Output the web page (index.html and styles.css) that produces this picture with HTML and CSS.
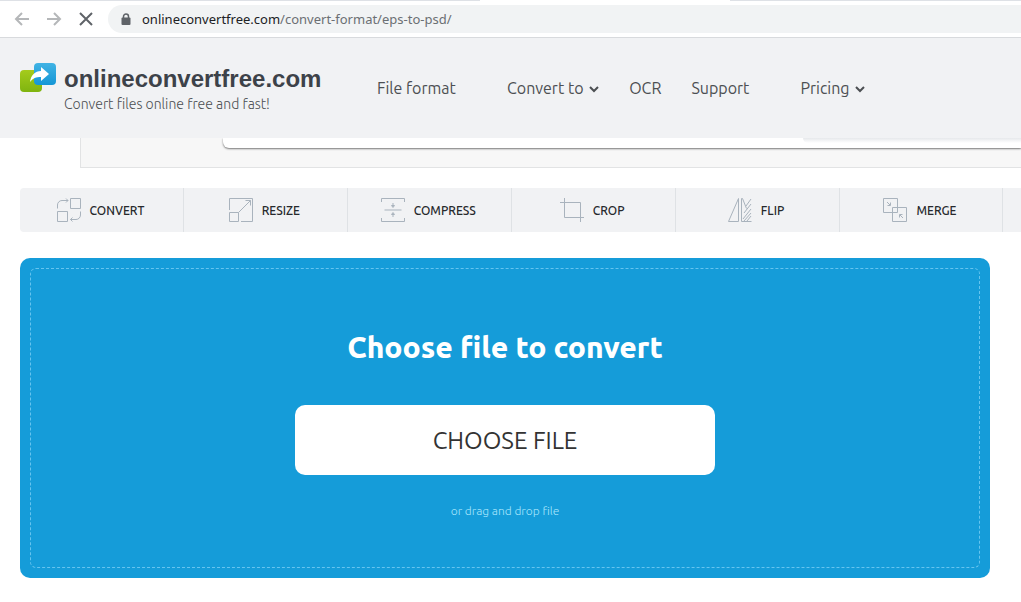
FILE: index.html
```html
<!DOCTYPE html>
<html lang="en">
<head>
  <meta charset="UTF-8">
  <meta name="viewport" content="width=device-width, initial-scale=1.0">
  <title>Convert EPS to PSD online</title>
  <link rel="stylesheet" href="styles.css">
</head>
<body>
  <div class="tab-strip">
    <div class="tab-edge"></div>
    <div class="tab-active"></div>
    <div class="tab-edge tab-edge-right"></div>
  </div>

  <div class="browser-bar">
    <div class="browser-buttons">
      <button type="button" aria-label="Back">
        <svg width="16" height="16" viewBox="0 0 16 16"><path d="M15 8H2M8 2L2 8l6 6"/></svg>
      </button>
      <button type="button" aria-label="Forward">
        <svg width="16" height="16" viewBox="0 0 16 16"><path d="M1 8h13M8 2l6 6-6 6"/></svg>
      </button>
      <button type="button" class="stop" aria-label="Stop loading">
        <svg width="16" height="16" viewBox="0 0 16 16"><path d="M2 2l12 12M14 2L2 14"/></svg>
      </button>
    </div>
    <div class="address">
      <svg width="10" height="13" viewBox="0 0 10 13">
        <path d="M2.500 5V3.500a2.500 2.500 0 0 1 5 0V5" fill="none" stroke="#5f6368" stroke-width="1.500"/>
        <rect x="0.500" y="4.500" width="9" height="7.500" rx="1" fill="#5f6368"/>
      </svg>
      <span><b>onlineconvertfree.com</b>/convert-format/eps-to-psd/</span>
    </div>
  </div>

  <header class="header">
    <a href="#" class="brand">
      <svg class="logo" width="36" height="30" viewBox="0 0 36 30">
        <defs>
          <linearGradient id="green" x1="0" y1="0" x2="0" y2="1">
            <stop offset="0" stop-color="#a5cb1c"/>
            <stop offset="1" stop-color="#7fb40f"/>
          </linearGradient>
          <linearGradient id="blue" x1="0" y1="0" x2="0" y2="1">
            <stop offset="0" stop-color="#41b3e4"/>
            <stop offset="1" stop-color="#1496d6"/>
          </linearGradient>
        </defs>
        <rect x="0" y="7" width="22" height="22" rx="4" fill="url(#green)"/>
        <rect x="14" y="0" width="22" height="22" rx="4" fill="url(#blue)"/>
        <path d="M10 19c1-7 5-11 11-11V4l8 7-8 7v-4c-5 0-8 1-11 5z" fill="#fff"/>
      </svg>
      <span class="brand-text">
        <strong>onlineconvertfree.com</strong>
        <small>Convert files online free and fast!</small>
      </span>
    </a>
    <nav class="nav">
      <a href="#" class="nav-formats">File format</a>
      <a href="#" class="nav-convert">Convert to
        <svg width="10" height="8" viewBox="0 0 10 8"><path d="M1 1l4 4 4-4"/></svg>
      </a>
      <a href="#" class="nav-ocr">OCR</a>
      <a href="#" class="nav-support">Support</a>
      <a href="#">Pricing
        <svg width="10" height="8" viewBox="0 0 10 8"><path d="M1 1l4 4 4-4"/></svg>
      </a>
    </nav>
  </header>

  <div class="banner">
    <div class="banner-card">
      <div class="banner-shade"></div>
    </div>
  </div>

  <nav class="tools">
    <a href="#">
      <svg width="26" height="26" viewBox="0 0 26 26">
        <path d="M14.500 1.500h10v10h-10zM1.500 14.500h10v10h-10zM1.500 11.500V8a4.500 4.500 0 0 1 4.500-4.500h6M10 1.500l2 2-2 2M24.500 14.500V18a4.500 4.500 0 0 1-4.500 4.500h-5.500M16.500 20.500l-2 2 2 2"/>
      </svg>
      Convert
    </a>
    <a href="#">
      <svg width="26" height="26" viewBox="0 0 26 26">
        <path d="M1.500 13V1.500h23v23H13M1.500 15.500h9v9h-9zM10.500 15.500l12-12M17.500 3.500h5v5"/>
      </svg>
      Resize
    </a>
    <a href="#">
      <svg width="26" height="26" viewBox="0 0 26 26">
        <path d="M1.500 5V1.500h23V5M1.500 21v3.500h23V21M4.500 13h17M13 6v4M11.500 8.500l1.500 2 1.500-2zM13 20v-4M11.500 17.500l1.500-2 1.500 2z"/>
      </svg>
      Compress
    </a>
    <a href="#">
      <svg width="26" height="26" viewBox="0 0 26 26">
        <path d="M1 5.500h20.500V25M5.500 1v19.500H25"/>
      </svg>
      Crop
    </a>
    <a href="#">
      <svg width="26" height="26" viewBox="0 0 26 26">
        <path d="M11.500 1.500v23h-10zM24.500 24.500h-10v-23h1l4 10M19 9l5-7M17 16l7-9M16 22l8-10M17 24l7-8M20 24l4-5"/>
      </svg>
      Flip
    </a>
    <a href="#">
      <svg width="26" height="26" viewBox="0 0 26 26">
        <path d="M1.500 1.500h14v14h-14zM10.500 10.500h14v14h-14zM5 5l3 3M8.500 5.500v3h-3M21 21l-3-3M17.500 20.500v-3h3"/>
      </svg>
      Merge
    </a>
    <span class="tools-rest"></span>
  </nav>

  <main class="uploader">
    <div class="dropzone">
      <h1>Choose file to convert</h1>
      <button type="button" class="choose">CHOOSE FILE</button>
      <p>or drag and drop file</p>
    </div>
  </main>
</body>
</html>
```
FILE: styles.css
```css
* {
  box-sizing: border-box;
}
body {
  margin: 0;
  background-color: #fff;
  color: #4c4f52;
  font-family: Ubuntu, "Open Sans", "Noto Sans", sans-serif;
  overflow-x: hidden;
}
a {
  color: inherit;
  text-decoration: none;
}
svg {
  flex: none;
}

/* browser chrome */
.tab-strip {
  display: flex;
  height: 1px;
}
.tab-edge {
  flex: 480;
  background-color: #dee1e6;
}
.tab-active {
  flex: 250;
}
.tab-edge-right {
  flex: 291;
}
.browser-bar {
  display: flex;
  height: 37px;
  padding: 4px 0;
  border-bottom: 1px solid #d8dadd;
}
.browser-buttons {
  display: flex;
  flex: none;
  gap: 16px;
  width: 108px;
  padding-left: 14px;
}
.browser-buttons button {
  width: 16px;
  padding: 0;
  border: 0;
  background: none;
}
.browser-buttons svg {
  display: block;
  fill: none;
  stroke: #b5b7b9;
  stroke-width: 2;
}
.browser-buttons .stop svg {
  stroke: #5f6368;
}
.address {
  display: flex;
  flex: 1;
  align-items: center;
  gap: 11px;
  height: 28px;
  padding-left: 13px;
  border-radius: 14px 0 0 14px;
  background-color: #f1f3f4;
  color: #6b6f73;
  font-family: "Segoe UI", "Noto Sans", sans-serif;
  font-size: 13px;
}
.address b {
  color: #202124;
  font-weight: 400;
}

/* site header */
.header {
  display: flex;
  align-items: center;
  gap: 30px;
  height: 100px;
  padding-left: 20px;
  background-color: #f1f2f4;
}
.brand {
  display: flex;
  gap: 8px;
  min-width: 327px;
}
.brand-text strong,
.brand-text small {
  display: block;
}
.brand-text strong {
  color: #3d4249;
  font-family: "Liberation Sans", Arial, sans-serif;
  font-size: 24px;
  line-height: 32px;
}
.brand-text small {
  font-size: 14px;
  font-weight: 300;
  line-height: 18px;
}
.nav {
  display: flex;
  gap: 30px;
  font-size: 16px;
  line-height: 22px;
  white-space: nowrap;
}
.nav svg {
  margin-left: 2px;
  fill: none;
  stroke: #4c4f52;
  stroke-width: 2;
}
.nav-formats {
  min-width: 100px;
}
.nav-convert {
  min-width: 92px;
}
.nav-ocr {
  min-width: 32px;
}
.nav-support {
  min-width: 79px;
}

/* banner scrolled under the header */
.banner {
  height: 30px;
  margin-left: 80px;
  padding-left: 142px;
  border: 1px solid #e2e3e4;
  border-width: 0 0 1px 1px;
  background-color: #f7f7f7;
  overflow: hidden;
}
.banner-card {
  height: 10px;
  border-radius: 0 0 0 6px;
  background-color: #fff;
  box-shadow: 0 1px 2px #777;
  overflow: hidden;
}
.banner-shade {
  height: 5px;
  margin-left: 580px;
  border-radius: 0 0 0 5px;
  background: linear-gradient(#e6e8eb, #fff);
}

/* tools */
.tools {
  display: flex;
  height: 44px;
  margin: 20px 0 26px 20px;
  border-radius: 4px 0 0 4px;
  background-color: #f1f2f4;
  color: #27292c;
  font-size: 12px;
  font-weight: 500;
  text-transform: uppercase;
}
.tools a {
  display: flex;
  flex: 164;
  align-items: center;
  justify-content: center;
  gap: 8px;
  padding-right: 3px;
  border-right: 1px solid #dfe2e5;
}
.tools svg {
  fill: none;
  stroke: #a9b3bd;
}
.tools-rest {
  flex: 18;
}

/* upload area */
.uploader {
  margin: 0 31px 24px 20px;
  padding: 10px;
  border-radius: 10px;
  background-color: #159cd9;
}
.dropzone {
  display: flex;
  flex-direction: column;
  align-items: center;
  padding: 58px 20px 46px;
  border: 1px dashed #66c4ef;
  border-radius: 6px;
}
.dropzone h1 {
  margin: 0 0 38px;
  color: #fff;
  font-size: 30px;
  font-weight: 800;
  line-height: 40px;
}
.choose {
  width: 100%;
  max-width: 420px;
  height: 70px;
  border: 0;
  border-radius: 10px;
  background-color: #fff;
  color: #333;
  font-family: inherit;
  font-size: 24px;
}
.dropzone p {
  margin: 26px 0 0;
  color: #a9e6fc;
  font-size: 12px;
  font-weight: 300;
  line-height: 20px;
}
```
